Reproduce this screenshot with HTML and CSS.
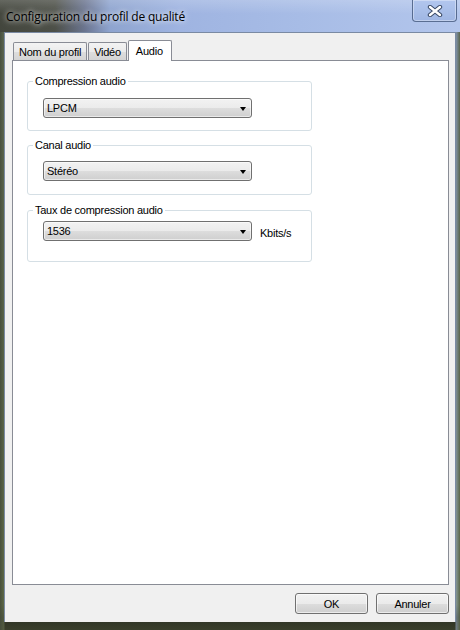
FILE: index.html
```html
<!DOCTYPE html>
<html lang="fr">
<head>
<meta charset="utf-8">
<title>Configuration du profil de qualité</title>
<link rel="stylesheet" href="styles.css">
</head>
<body>
<div class="window">
  <div class="titlebar">
    <span class="title">Configuration du profil de qualité</span>
    <div class="close-btn" aria-label="Fermer">
      <svg width="16" height="12" viewBox="0 0 16 12">
        <path d="M3 2 L13 10 M13 2 L3 10" stroke="#3a4a66" stroke-width="4.4" stroke-linecap="round"/>
        <path d="M3 2 L13 10 M13 2 L3 10" stroke="#ffffff" stroke-width="2.4" stroke-linecap="round"/>
      </svg>
    </div>
  </div>
  <div class="client">
    <div class="tabs">
      <div class="tab">Nom du profil</div>
      <div class="tab">Vidéo</div>
      <div class="tab tab-active">Audio</div>
    </div>
    <div class="panel">
      <fieldset class="group group-1">
        <legend>Compression audio</legend>
        <div class="row">
          <div class="combo"><span>LPCM</span><i class="arrow"></i></div>
        </div>
      </fieldset>
      <fieldset class="group group-2">
        <legend>Canal audio</legend>
        <div class="row">
          <div class="combo"><span>Stéréo</span><i class="arrow"></i></div>
        </div>
      </fieldset>
      <fieldset class="group group-3">
        <legend>Taux de compression audio</legend>
        <div class="row">
          <div class="combo"><span>1536</span><i class="arrow"></i></div>
          <span class="unit">Kbits/s</span>
        </div>
      </fieldset>
    </div>
    <div class="buttons">
      <button class="btn">OK</button>
      <button class="btn">Annuler</button>
    </div>
  </div>
</div>
</body>
</html>
```
FILE: styles.css
```css
html, body {
  margin: 0;
  padding: 0;
}
body {
  width: 460px;
  height: 630px;
  overflow: hidden;
  font-family: "Liberation Sans", Arial, sans-serif;
  font-size: 11px;
  letter-spacing: -0.25px;
  color: #000;
}
.window {
  width: 460px;
  height: 630px;
  display: flex;
  flex-direction: column;
  background:
    linear-gradient(90deg, rgba(70,78,60,0.95) 0, rgba(90,100,70,0.8) 4px, rgba(120,140,180,0.0) 5px, rgba(120,140,180,0) 455px, rgba(150,170,200,0.6) 456px, rgba(90,100,70,0.9) 460px),
    linear-gradient(180deg, #5e6b7e 0%, #59664f 60%, #6e7c4a 96%, #2d3124 98%, #3a3f2c 100%);
}
.titlebar {
  height: 32px;
  flex: none;
  display: flex;
  align-items: flex-start;
  background:
    linear-gradient(180deg, rgba(255,255,255,0.18) 0, rgba(255,255,255,0) 14px),
    linear-gradient(90deg, #43463d 0, #4d5048 55px, #6b7590 85px, #8ea4cf 110px, #9fb4e1 180px, #a7bce6 300px, #b3c6ec 460px);
}
.title {
  font-family: "Open Sans", "Noto Sans", sans-serif;
  font-size: 12px;
  letter-spacing: -0.2px;
  line-height: 16px;
  padding: 9px 0 0 6px;
  color: #000;
  text-shadow: 0 0 5px rgba(255,255,255,0.85), 0 0 8px rgba(255,255,255,0.6);
}
.close-btn {
  margin-left: auto;
  margin-right: 3px;
  width: 45px;
  height: 22px;
  box-sizing: border-box;
  border: 1px solid rgba(60,80,115,0.75);
  border-top: none;
  border-radius: 0 0 4px 4px;
  background: linear-gradient(180deg, #b2c6ee 0%, #a9bfe9 50%, #9fb6e3 100%);
  box-shadow: inset 0 0 0 1px rgba(255,255,255,0.35);
  display: flex;
  align-items: center;
  justify-content: center;
}
.client {
  flex: none;
  margin: 0 4px 0 4px;
  height: 590px;
  box-sizing: border-box;
  background: #f0f0f0;
  border: 1px solid #7a8aa3;
  border-bottom: none;
  padding: 7px 6px 8px 7px;
  display: flex;
  flex-direction: column;
}
.tabs {
  display: flex;
  align-items: flex-end;
  height: 21px;
  padding-left: 1px;
  position: relative;
  z-index: 1;
  margin-bottom: -1px;
}
.tab {
  height: 18px;
  box-sizing: border-box;
  padding: 3px 5px 0 5px;
  line-height: 13px;
  border: 1px solid #898c95;
  border-bottom: none;
  border-radius: 2px 2px 0 0;
  background: linear-gradient(180deg, #f3f3f3 0%, #ebebeb 50%, #dedede 51%, #d4d4d4 100%);
  margin-right: 1px;
  margin-bottom: 1px;
}
.tab-active {
  height: 21px;
  margin-bottom: 0;
  padding: 4px 8px 0 7px;
  background: #fff;
}
.panel {
  height: 525px;
  box-sizing: border-box;
  border: 1px solid #898c95;
  background: #fff;
  padding: 13px 0 0 14px;
}
.group {
  width: 285px;
  box-sizing: border-box;
  margin: 0;
  border: 1px solid #d5dfe5;
  border-radius: 3px;
  padding: 0 0 0 5px;
  min-inline-size: 0;
}
.group legend {
  padding: 0 2px;
  line-height: 14px;
  height: 14px;
}
.group-1 { padding-top: 10px; padding-bottom: 12px; }
.group-2 { margin-top: 7px; padding-top: 9px; padding-bottom: 13px; }
.group-3 { margin-top: 8px; padding-top: 4px; padding-bottom: 20px; }
.row {
  display: flex;
  align-items: center;
  margin-left: 10px;
}
.combo {
  width: 209px;
  height: 20px;
  box-sizing: border-box;
  border: 1px solid #707070;
  border-radius: 3px;
  background: linear-gradient(180deg, #f2f2f2 0%, #ebebeb 50%, #dddddd 51%, #cfcfcf 100%);
  box-shadow: inset 0 0 0 1px rgba(255,255,255,0.55);
  display: flex;
  align-items: center;
  padding: 0 5px 0 3px;
  line-height: 18px;
}
.combo span {
  flex: 1;
}
.arrow {
  width: 0;
  height: 0;
  border-left: 3.5px solid transparent;
  border-right: 3.5px solid transparent;
  border-top: 4px solid #000;
  margin-top: 1px;
}
.unit {
  margin-left: 8px;
  padding-top: 3px;
}
.buttons {
  display: flex;
  justify-content: flex-end;
  gap: 8px;
  margin-top: 8px;
}
.btn {
  width: 73px;
  height: 21px;
  box-sizing: border-box;
  border: 1px solid #707070;
  border-radius: 3px;
  background: linear-gradient(180deg, #f2f2f2 0%, #ebebeb 50%, #dddddd 51%, #cfcfcf 100%);
  box-shadow: inset 0 0 0 1px rgba(255,255,255,0.6);
  font-family: "Liberation Sans", Arial, sans-serif;
  font-size: 11px;
  letter-spacing: -0.25px;
  color: #000;
  padding: 0;
}
```
